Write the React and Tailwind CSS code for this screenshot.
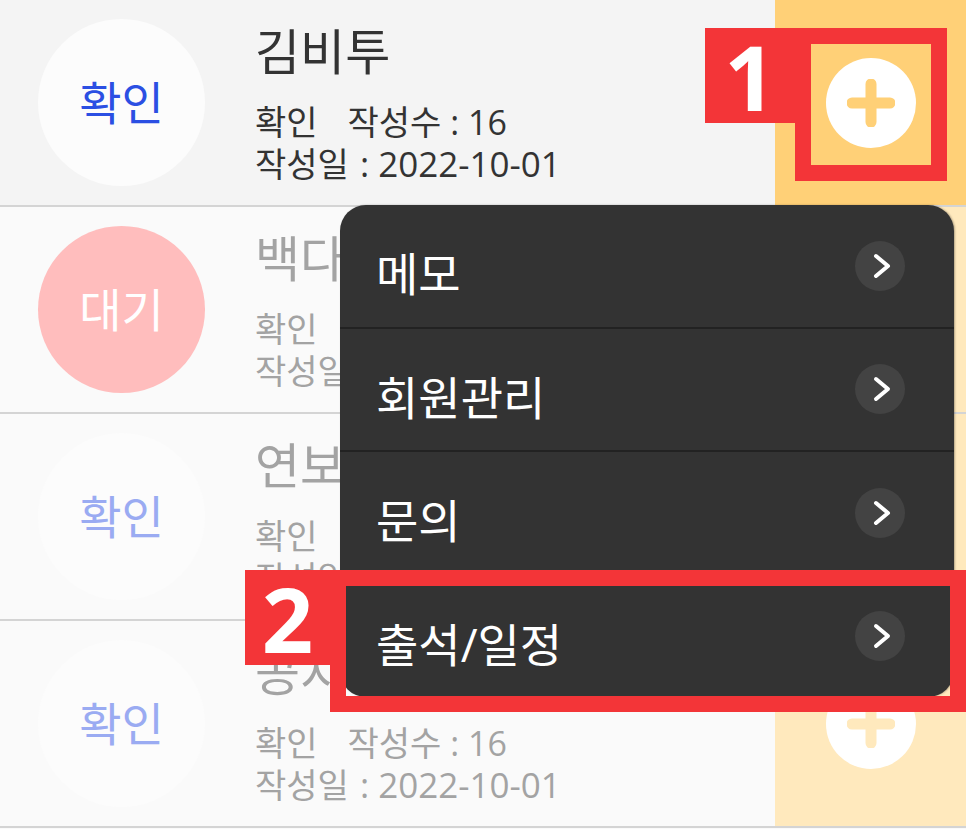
const FONT = { fontFamily: '"Open Sans", "Noto Sans CJK KR", sans-serif' };

const rows = [
  { name: '김비투', status: '확인', active: true },
  { name: '백다은', status: '대기' },
  { name: '연보라', status: '확인' },
  { name: '공지현', status: '확인' },
];

const menu = ['메모', '회원관리', '문의', '출석/일정'];

function PlusButton({ active }) {
  return (
    <div className="w-[90px] h-[90px] rounded-full bg-white flex items-center justify-center">
      <svg width="48" height="48" viewBox="0 0 48 48">
        <path
          d="M24 5v38M5 24h38"
          stroke={active ? '#ffd077' : '#ffe9bd'}
          strokeWidth="11"
          strokeLinecap="round"
        />
      </svg>
    </div>
  );
}

function Chevron() {
  return (
    <span className="w-[50px] h-[50px] rounded-full bg-[#434343] flex items-center justify-center">
      <svg width="50" height="50" viewBox="0 0 50 50" fill="none">
        <path d="M21 15l12 10-12 10" stroke="#fff" strokeWidth="4" strokeLinecap="round" strokeLinejoin="round" />
      </svg>
    </span>
  );
}

function Row({ row }) {
  const { name, status, active } = row;
  const pending = status === '대기';
  return (
    <div className={`flex h-[207px] border-b-2 border-[#d4d4d4] ${active ? 'bg-[#f4f4f4]' : 'bg-[#fafafa]'}`}>
      <div className="flex-1 flex items-center pl-[38px]">
        <div
          className={`w-[167px] h-[167px] rounded-full flex items-center justify-center text-[46px] ${
            pending ? 'bg-[#ffbdbd] text-white' : active ? 'bg-[#fcfcfc] text-[#2b4fe3]' : 'bg-[#fcfcfc] text-[#9aabf2]'
          }`}
        >
          {status}
        </div>
        <div className={`self-start ml-[50px] pt-[22px] ${active ? 'text-[#333333]' : 'text-[#a3a3a3]'}`}>
          <div className="text-[49px] leading-[58px]">{name}</div>
          <div className="mt-[22px] text-[34px] leading-[41px]">
            <div>
              <span>확인</span>
              <span className="ml-[30px]">작성수 : 16</span>
            </div>
            <div>
              작성일<span className="pl-[2px] text-[35px]"> : 2022-10-01</span>
            </div>
          </div>
        </div>
      </div>
      <div className={`w-[191px] flex items-center justify-center ${active ? 'bg-[#ffd077]' : 'bg-[#ffe9bd]'}`}>
        <PlusButton active={active} />
      </div>
    </div>
  );
}

export default function App() {
  return (
    <div className="relative w-[966px] h-[829px] overflow-hidden bg-[#fafafa]" style={FONT}>
      {rows.map((r) => (
        <Row key={r.name} row={r} />
      ))}

      {/* popup menu */}
      <div className="absolute left-[340px] top-[205px] w-[614px] h-[492px] rounded-[26px] bg-[#333333] overflow-hidden flex flex-col shadow-[1px_0_2px_rgba(0,0,0,0.3)]">
        {menu.map((m, i) => (
          <div
            key={m}
            className={`flex-1 flex items-center justify-between pl-[36px] pr-[49px] text-white text-[46px] ${
              i < menu.length - 1 ? 'border-b-2 border-[#222222]' : ''
            }`}
          >
            <span className="pt-[16px]">{m}</span>
            <Chevron />
          </div>
        ))}
      </div>

      {/* annotation 1 */}
      <div className="absolute left-[705px] top-[28px] w-[106px] h-[95px] bg-[#f33538]" />
      <div className="absolute left-[795px] top-[28px] w-[152px] h-[153px] border-[16px] border-[#f33538]" />
      <div className="absolute left-[705px] top-[28px] w-[90px] h-[95px] flex items-center justify-center text-white text-[90px] font-bold leading-none">
        1
      </div>

      {/* annotation 2 */}
      <div className="absolute left-[245px] top-[570px] w-[101px] h-[95px] bg-[#f33538]" />
      <div className="absolute left-[330px] top-[570px] w-[636px] h-[142px] border-[16px] border-[#f33538]" />
      <div className="absolute left-[245px] top-[570px] w-[85px] h-[95px] flex items-center justify-center text-white text-[90px] font-bold leading-none">
        2
      </div>
    </div>
  );
}
